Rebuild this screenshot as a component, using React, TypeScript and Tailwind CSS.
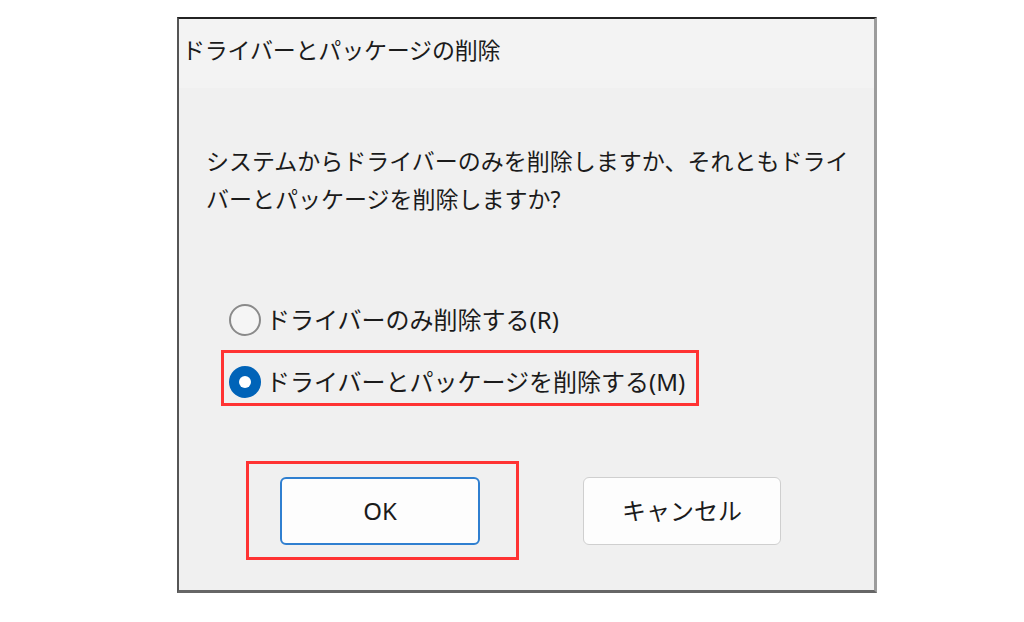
const font = { fontFamily: '"Noto Sans", "Noto Sans CJK JP", sans-serif' };

function Radio({ checked }: { checked?: boolean }) {
  if (checked) {
    return (
      <span className="flex h-[32px] w-[32px] shrink-0 items-center justify-center rounded-full bg-[#0063b8]">
        <span className="h-[12px] w-[12px] rounded-full bg-white" />
      </span>
    );
  }
  return <span className="h-[32px] w-[32px] shrink-0 rounded-full border-2 border-[#8a8a8a] bg-[#f5f5f5]" />;
}

export default function App() {
  return (
    <div className="min-h-[622px] bg-white pl-[177px] pt-[17px] text-[#1b1b1b]" style={font}>
      <div className="flex h-[576px] w-[700px] flex-col border-t-2 border-l-2 border-r-[3px] border-b-[3px] border-t-[#222] border-l-[#555] border-r-[#9c9c9c] border-b-[#666] bg-[#f0f0f0]">
        <div className="flex h-[69px] items-center bg-[#f3f3f3] pl-[3px] pb-[6px] text-[23px] tracking-[-0.2px]">
          ドライバーとパッケージの削除
        </div>

        <div className="flex flex-1 flex-col">
          <div className="mt-[54px] pl-[27px] text-[23px] leading-[38px]">
            <div>システムからドライバーのみを削除しますか、それともドライ</div>
            <div>バーとパッケージを削除しますか?</div>
          </div>

          <div className="mt-[85px] flex h-[34px] items-center gap-[5px] pl-[50px] text-[24px]">
            <Radio />
            <span>ドライバーのみ削除する(R)</span>
          </div>

          <div className="mt-[13px] ml-[42px] flex h-[56px] w-[478px] items-center gap-[5px] border-[3px] border-[#ff3333] pl-[5px] pt-[8px] text-[24px]">
            <Radio checked />
            <span>ドライバーとパッケージを削除する(M)</span>
          </div>

          <div className="mt-[55px] ml-[67px] flex items-center gap-[64px]">
            <div className="h-[99px] w-[273px] border-[3px] border-[#ff3333] pl-[31px] pt-[13px]">
              <button className="flex h-[68px] w-[200px] items-center justify-center rounded-[6px] border-2 border-[#2f7fd0] bg-[#fdfdfd] text-[24px]">
                OK
              </button>
            </div>
            <button className="flex h-[68px] w-[198px] items-center justify-center rounded-[6px] border border-[#cfcfcf] bg-[#fdfdfd] text-[24px]">
              キャンセル
            </button>
          </div>
        </div>
      </div>
    </div>
  );
}
